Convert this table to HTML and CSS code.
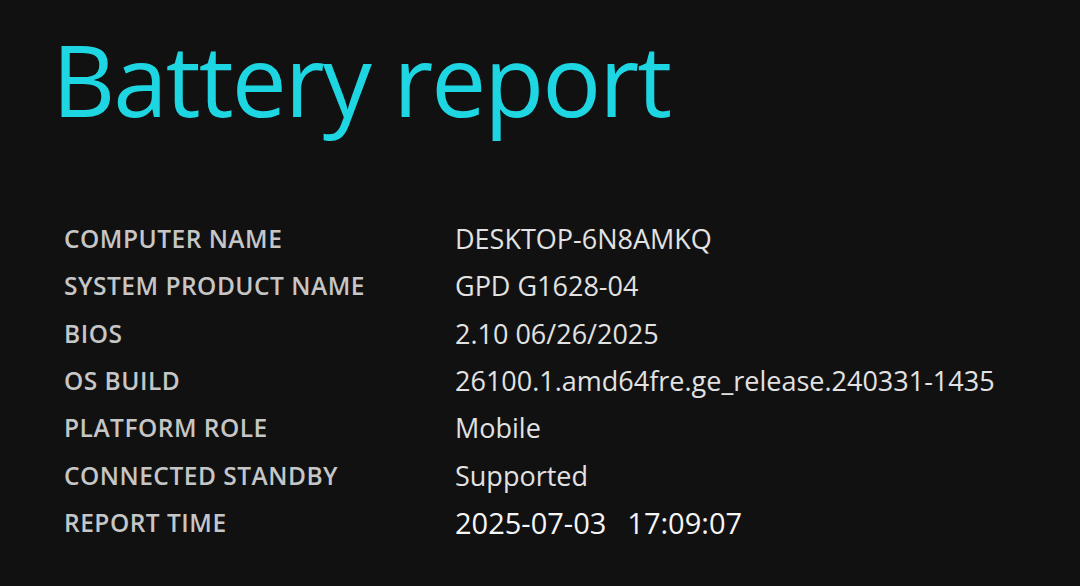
FILE: index.html
```html
<!DOCTYPE html>
<html>
<head>
<meta charset="utf-8">
<link rel="stylesheet" href="styles.css">
</head>
<body>
<div class="page">
  <h1 class="title">Battery report</h1>
  <table class="info">
    <tr><td class="label">COMPUTER NAME</td><td class="value">DESKTOP-6N8AMKQ</td></tr>
    <tr><td class="label">SYSTEM PRODUCT NAME</td><td class="value">GPD G1628-04</td></tr>
    <tr><td class="label">BIOS</td><td class="value">2.10 06/26/2025</td></tr>
    <tr><td class="label">OS BUILD</td><td class="value">26100.1.amd64fre.ge_release.240331-1435</td></tr>
    <tr><td class="label">PLATFORM ROLE</td><td class="value">Mobile</td></tr>
    <tr><td class="label">CONNECTED STANDBY</td><td class="value">Supported</td></tr>
    <tr><td class="label">REPORT TIME</td><td class="value strong"><span class="date">2025-07-03</span><span class="time">17:09:07</span></td></tr>
  </table>
</div>
</body>
</html>
```

FILE: styles.css
```css
html, body {
  margin: 0;
  padding: 0;
  background: #111111;
  height: 100%;
  overflow: hidden;
}
.page {
  padding: 14px 0 0 52px;
  font-family: "Open Sans", "Noto Sans", sans-serif;
}
.title {
  margin: 0;
  font-weight: 400;
  font-size: 98px;
  line-height: 130px;
  color: #1ed6e2;
  letter-spacing: -2px;
}
.info {
  border-collapse: collapse;
  margin-top: 71px;
  margin-left: 12px;
}
.info td {
  padding: 0;
  height: 47.3px;
  vertical-align: middle;
  white-space: nowrap;
}
.label {
  width: 391px;
  font-size: 24.5px;
  font-weight: 600;
  letter-spacing: 0.5px;
  color: #c6c6c6;
}
.value {
  font-size: 27px;
  font-weight: 400;
  color: #e2e2e2;
}
.value.strong {
  font-size: 29px;
  font-weight: 500;
  color: #f6f6f6;
}
.date {
  margin-right: 21px;
}
```
